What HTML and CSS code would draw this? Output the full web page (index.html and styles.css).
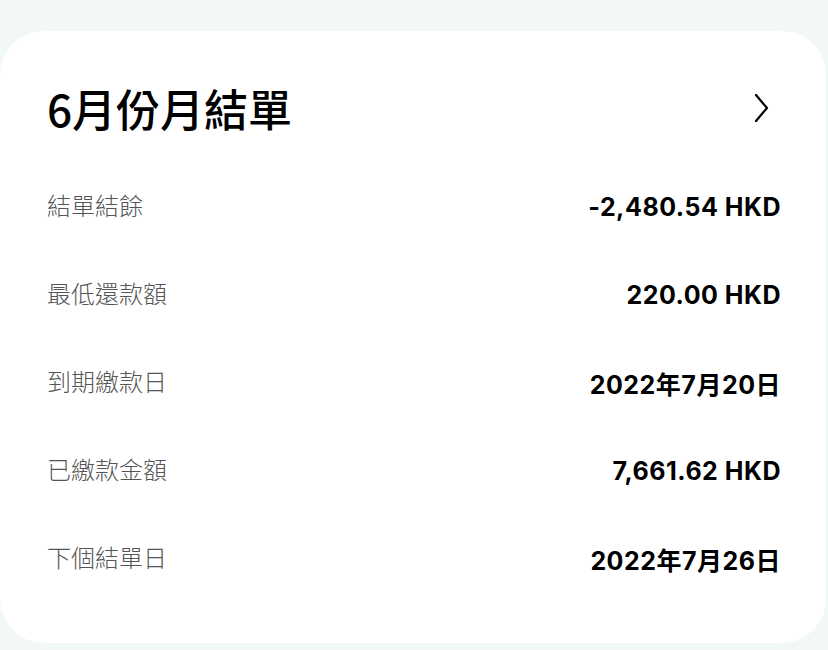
FILE: index.html
```html
<!DOCTYPE html>
<html lang="zh-Hant">
<head>
    <meta charset="UTF-8">
    <meta name="viewport" content="width=device-width, initial-scale=1.0">
    <title>6月份月結單</title>
    <link rel="stylesheet" href="styles.css">
</head>
<body>

    <div class="statement-card">
        <div class="statement-header">
            <h1>6月份月結單</h1>
            <svg class="chevron" width="16" height="30" viewBox="0 0 16 30">
                <path d="M2 2 L13 15 L2 28" fill="none" stroke="#000" stroke-width="2.2" stroke-linecap="round" stroke-linejoin="round"/>
            </svg>
        </div>

        <div class="statement-rows">
            <div class="row">
                <span class="label">結單結餘</span>
                <span class="value">-2,480.54 HKD</span>
            </div>
            <div class="row">
                <span class="label">最低還款額</span>
                <span class="value">220.00 HKD</span>
            </div>
            <div class="row">
                <span class="label">到期繳款日</span>
                <span class="value">2022年7月20日</span>
            </div>
            <div class="row">
                <span class="label">已繳款金額</span>
                <span class="value">7,661.62 HKD</span>
            </div>
            <div class="row">
                <span class="label">下個結單日</span>
                <span class="value">2022年7月26日</span>
            </div>
        </div>
    </div>

</body>
</html>
```

FILE: styles.css
```css
body {
    margin: 0;
    background-color: #f2f7f7;
    font-family: "Noto Sans CJK TC", "Noto Sans", sans-serif;
    color: #000;
}
.statement-card {
    width: 826px;
    height: 612px;
    margin-top: 31px;
    box-sizing: border-box;
    padding: 47px 45px 40px 47px;
    background-color: #fff;
    border-radius: 44px;
}
.statement-header {
    height: 60px;
    display: flex;
    align-items: center;
    justify-content: space-between;
    margin-bottom: 22px;
}
.statement-header h1 {
    margin: 0;
    font-size: 44px;
    font-weight: 500;
    line-height: 60px;
}
.chevron {
    margin-right: 11px;
}
.row {
    height: 88px;
    display: flex;
    align-items: center;
    justify-content: space-between;
}
.label {
    font-size: 24px;
    font-weight: 300;
    color: #555;
}
.value {
    font-family: "Inter", "Noto Sans CJK TC", sans-serif;
    font-size: 25px;
    font-weight: 700;
    letter-spacing: 0.5px;
    margin-top: 5px;
}
```
